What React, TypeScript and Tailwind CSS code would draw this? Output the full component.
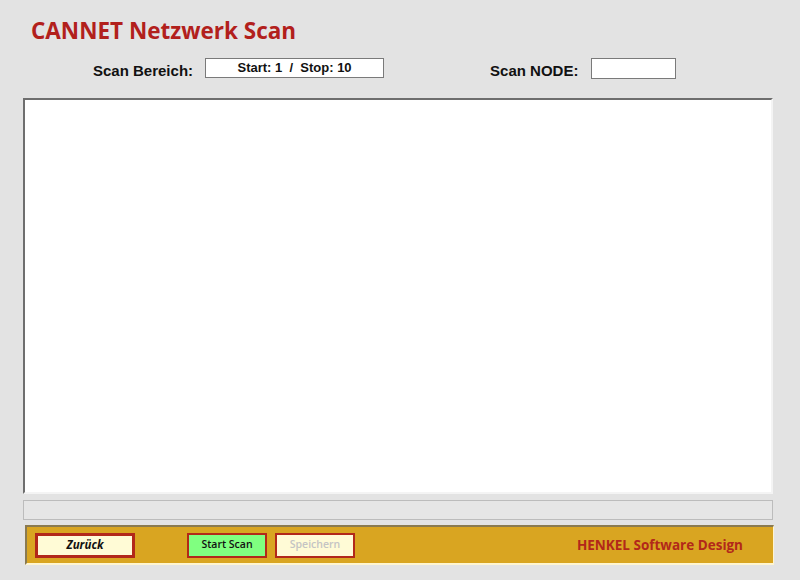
import React from "react";

const ui = { fontFamily: '"Liberation Sans", Arial, sans-serif' };
const sego = { fontFamily: '"Open Sans", "Noto Sans", sans-serif' };

export default function App() {
  return (
    <div className="w-[800px] h-[580px] bg-[#e3e3e3] overflow-hidden flex flex-col">
      {/* Titel */}
      <div className="h-[50px] pl-[31px] pt-[16px]">
        <h1 className="text-[22.5px] leading-[30px] font-bold text-[#b2201c]" style={sego}>
          CANNET Netzwerk Scan
        </h1>
      </div>

      {/* Eingaben */}
      <div className="h-[48px] pt-[8px] flex items-start" style={ui}>
        <div className="ml-[93px] mt-[4px] text-[15px] leading-[18px] font-bold text-[#111]">Scan Bereich:</div>
        <div className="ml-[12px] w-[179px] h-[20px] bg-white border border-[#7a7a7a] flex items-center justify-center text-[13px] font-bold text-[#111]">
          Start: 1&nbsp; /&nbsp; Stop: 10
        </div>
        <div className="ml-[106px] mt-[4px] text-[15px] leading-[18px] font-bold text-[#111]">Scan NODE:</div>
        <div className="ml-[13px] w-[85px] h-[21px] bg-white border border-[#7a7a7a]" />
      </div>

      {/* Liste */}
      <div className="ml-[23px] w-[750px] h-[396px] bg-white border-t-2 border-l-2 border-t-[#6e6e6e] border-l-[#6e6e6e] border-r-2 border-b-2 border-r-[#f4f4f4] border-b-[#f4f4f4]" />

      {/* Fortschritt */}
      <div className="ml-[23px] mt-[6px] w-[750px] h-[20px] bg-[#e6e6e6] border border-[#bcbcbc]" />

      {/* Fußleiste */}
      <div className="ml-[25px] mt-[5px] w-[749px] h-[40px] bg-[#d9a521] border-t-2 border-l-2 border-t-[#8a7a50] border-l-[#8a7a50] border-r border-b-2 border-r-[#fff5d0] border-b-[#fff5d0] flex items-center" style={sego}>
        <button className="ml-[8px] w-[100px] h-[25px] bg-[#fffbd6] border-[3px] border-[#b2281a] text-[11.5px] font-bold italic text-[#111]">
          Zurück
        </button>
        <button className="ml-[52px] w-[80px] h-[25px] bg-[#80ff80] border-[2px] border-[#b2281a] text-[10.5px] font-semibold text-[#111]">
          Start Scan
        </button>
        <button className="ml-[8px] w-[80px] h-[25px] bg-[#fffbd6] border-[2px] border-[#b2281a] text-[10.5px] font-semibold text-[#c4c4c4]">
          Speichern
        </button>
        <div className="ml-auto mr-[30px] text-[13.5px] font-bold text-[#b2281a]">HENKEL Software Design</div>
      </div>
    </div>
  );
}
